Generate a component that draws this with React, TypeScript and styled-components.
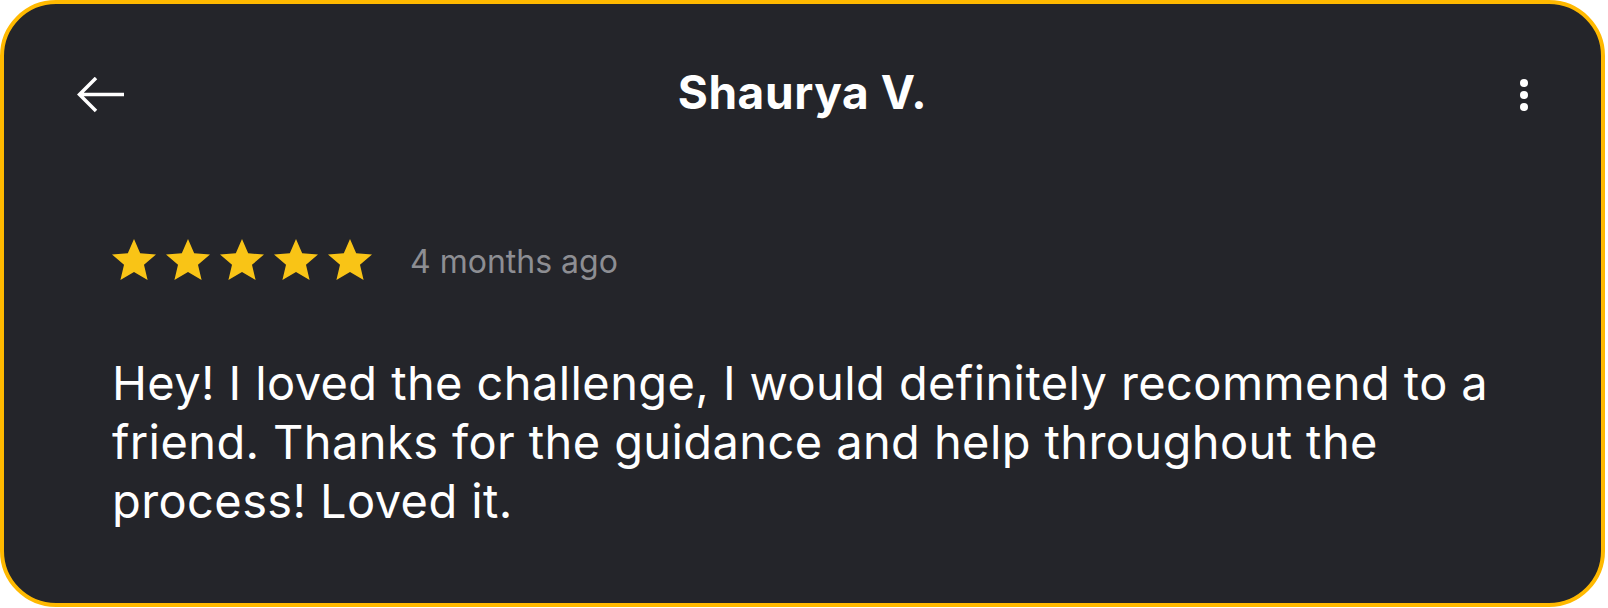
import React from "react";
import styled, { createGlobalStyle } from "styled-components";

const GlobalStyle = createGlobalStyle`
  html, body {
    margin: 0;
    padding: 0;
    background: #ffffff;
  }
  * { box-sizing: border-box; }
`;

const Card = styled.div`
  width: 1605px;
  height: 607px;
  background: #24252a;
  border: 4px solid #ffb900;
  border-radius: 56px;
  padding-top: 60px;
  display: flex;
  flex-direction: column;
  font-family: Inter, "Noto Sans", sans-serif;
  color: #ffffff;
`;

const Header = styled.div`
  height: 56px;
  padding: 0 73px;
  display: grid;
  grid-template-columns: 48px 1fr 48px;
  align-items: center;
`;

const IconButton = styled.button<{ $align?: "start" | "end" }>`
  background: none;
  border: none;
  padding: 0;
  color: #ffffff;
  display: flex;
  align-items: center;
  justify-content: ${(p) => (p.$align === "end" ? "flex-end" : "flex-start")};
  height: 56px;
  cursor: pointer;
`;

const Title = styled.h1`
  margin: 0;
  padding-bottom: 6px;
  text-align: center;
  font-size: 46px;
  font-weight: 700;
  letter-spacing: 0.6px;
  line-height: normal;
  color: #ffffff;
`;

const Dots = styled.div`
  display: flex;
  flex-direction: column;
  gap: 4px;
`;

const Dot = styled.span`
  width: 8px;
  height: 8px;
  border-radius: 50%;
  background: #ffffff;
`;

const Body = styled.div`
  padding: 0 50px 0 108px;
  display: flex;
  flex-direction: column;
`;

const RatingRow = styled.div`
  margin-top: 119px;
  display: flex;
  align-items: center;
  height: 41px;
`;

const Stars = styled.div`
  display: flex;
  gap: 10px;
`;

const Time = styled.span`
  margin-left: 38px;
  padding-top: 3px;
  font-size: 32px;
  line-height: normal;
  color: #8d8e93;
`;

const Review = styled.p`
  margin: 73px 0 0 0;
  font-size: 47px;
  letter-spacing: 0.4px;
  line-height: 59px;
  color: #ffffff;
`;

const Star = () => (
  <svg width="44" height="41" viewBox="2 2 20 19" preserveAspectRatio="none" aria-hidden>
    <path
      d="M12 2l2.81 6.63 7.19.61-5.46 4.73L18.18 21 12 17.27 5.82 21l1.64-7.03L2 9.24l7.19-.61z"
      fill="#f9c416"
    />
  </svg>
);

const BackArrow = () => (
  <svg width="48" height="36" viewBox="0 0 48 36" aria-hidden>
    <path
      d="M2.5 17.5H47M19 1L2.5 17.5L19 34"
      fill="none"
      stroke="#ffffff"
      strokeWidth="3.5"
    />
  </svg>
);

export default function App() {
  return (
    <>
      <GlobalStyle />
      <Card>
        <Header>
          <IconButton aria-label="Back">
            <BackArrow />
          </IconButton>
          <Title>Shaurya V.</Title>
          <IconButton $align="end" aria-label="More">
            <Dots>
              <Dot />
              <Dot />
              <Dot />
            </Dots>
          </IconButton>
        </Header>
        <Body>
          <RatingRow>
            <Stars>
              {[0, 1, 2, 3, 4].map((i) => (
                <Star key={i} />
              ))}
            </Stars>
            <Time>4 months ago</Time>
          </RatingRow>
          <Review>
            Hey! I loved the challenge, I would definitely recommend to a friend.
            Thanks for the guidance and help throughout the process! Loved it.
          </Review>
        </Body>
      </Card>
    </>
  );
}
